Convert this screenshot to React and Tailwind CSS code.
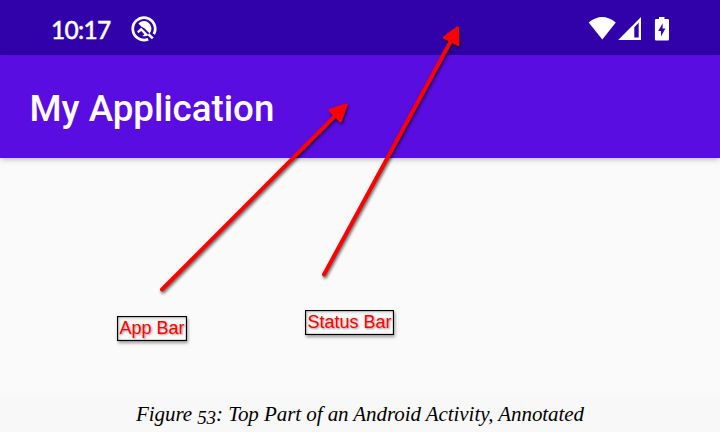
function StatusBar() {
  return (
    <header className="flex h-[55px] items-center bg-[#3102aa] text-white">
      <time className="ml-[51px] mt-[4px] w-[62px] whitespace-nowrap font-['Lato',sans-serif] text-[24.5px] leading-[30px] font-medium tracking-[-0.7px] [-webkit-text-stroke:0.4px_white]">
        10:17
      </time>
      <svg className="ml-[17px] mt-[2px] h-7 w-7" viewBox="0 0 28 28" fill="none">
        <path d="M18.2 24.2A11.2 11.2 0 1 1 23.8 19.2" stroke="white" strokeWidth="2.7" />
        <path d="M8.4 8.6A7.4 7.4 0 0 1 19.6 18.4L14.4 13.2L11.2 11.6Z" fill="white" />
        <path d="M7.2 16.2L11.2 12.8L18.4 20A7.4 7.4 0 0 1 12.4 20.9L14.4 19.2L11.2 16L8.2 18.2Z" fill="white" />
        <path d="M18.4 19.2L22.8 23.4" stroke="white" strokeWidth="2.6" />
      </svg>
      <svg className="ml-auto mr-[49px] h-[55px] w-[84px]" viewBox="587 0 84 55" fill="white">
        <path d="M588.7 22.6Q602.2 11.5 615.8 22.6L602.3 39.5Z" />
        <path fillRule="evenodd" d="M618.2 40L641 17V40ZM634.3 37.6H638.7V22.7L634.3 27.2Z" />
        <path
          fillRule="evenodd"
          d="M659 17H664.5V19H667.7Q669 19 669 20.3V39.2Q669 40.6 667.7 40.6H656.2Q654.9 40.6 654.9 39.2V20.3Q654.9 19 656.2 19H659ZM662.6 23.2L658.2 31H661V36.4L665.4 28.6H662.6Z"
        />
      </svg>
    </header>
  );
}

function Label({ className, children }) {
  return (
    <div
      className={`absolute flex items-center justify-center whitespace-nowrap border border-black font-['Liberation_Sans',sans-serif] text-[#f00] shadow-[1px_2px_3px_rgba(0,0,0,0.4),inset_0_0_1px_#000,inset_1px_1px_3px_rgba(0,0,0,0.25)] [text-shadow:1px_1px_2px_rgba(0,0,0,0.4)] ${className}`}
    >
      {children}
    </div>
  );
}

function Arrows() {
  return (
    <svg
      className="absolute inset-0 h-[432px] w-[720px] drop-shadow-[1px_2px_1.5px_rgba(0,0,0,0.6)]"
      viewBox="0 0 720 432"
      fill="#f00"
      stroke="#f00"
      strokeLinecap="round"
      strokeLinejoin="round"
    >
      <path d="M162 289.5L336 115M324 274.5L451 41" strokeWidth="4" />
      <path d="M346 105L330 110.2L335 115.5L340.5 121Z" strokeWidth="3" />
      <path d="M457.5 28L444.5 37.5L458 44.5Z" strokeWidth="3" />
    </svg>
  );
}

export default function App() {
  return (
    <div className="relative flex h-[432px] w-[720px] flex-col overflow-hidden bg-[#fafafa]">
      <StatusBar />
      <div className="z-0 flex h-[103px] items-center bg-[#5a0de0] pl-[29.5px] shadow-[0_1px_6px_rgba(0,0,0,0.28)]">
        <h1 className="mt-[4px] whitespace-nowrap font-['Roboto',sans-serif] text-[36.7px] font-medium text-white">
          My Application
        </h1>
      </div>
      <main className="flex-1" />
      <footer className="flex h-9 items-center justify-center bg-[#f8f8f8]">
        <p className="whitespace-nowrap font-['Liberation_Serif',serif] text-[21px] italic leading-7 tracking-[-0.06px] text-black">
          Figure <span className="relative top-[3px] text-[19px]">53</span>: Top Part of an Android Activity, Annotated
        </p>
      </footer>
      <Arrows />
      <Label className="left-[117px] top-[316px] h-[25px] w-[70px] text-[18px]">App Bar</Label>
      <Label className="left-[305px] top-[310px] h-[25px] w-[89px] text-[18px]">Status Bar</Label>
    </div>
  );
}
